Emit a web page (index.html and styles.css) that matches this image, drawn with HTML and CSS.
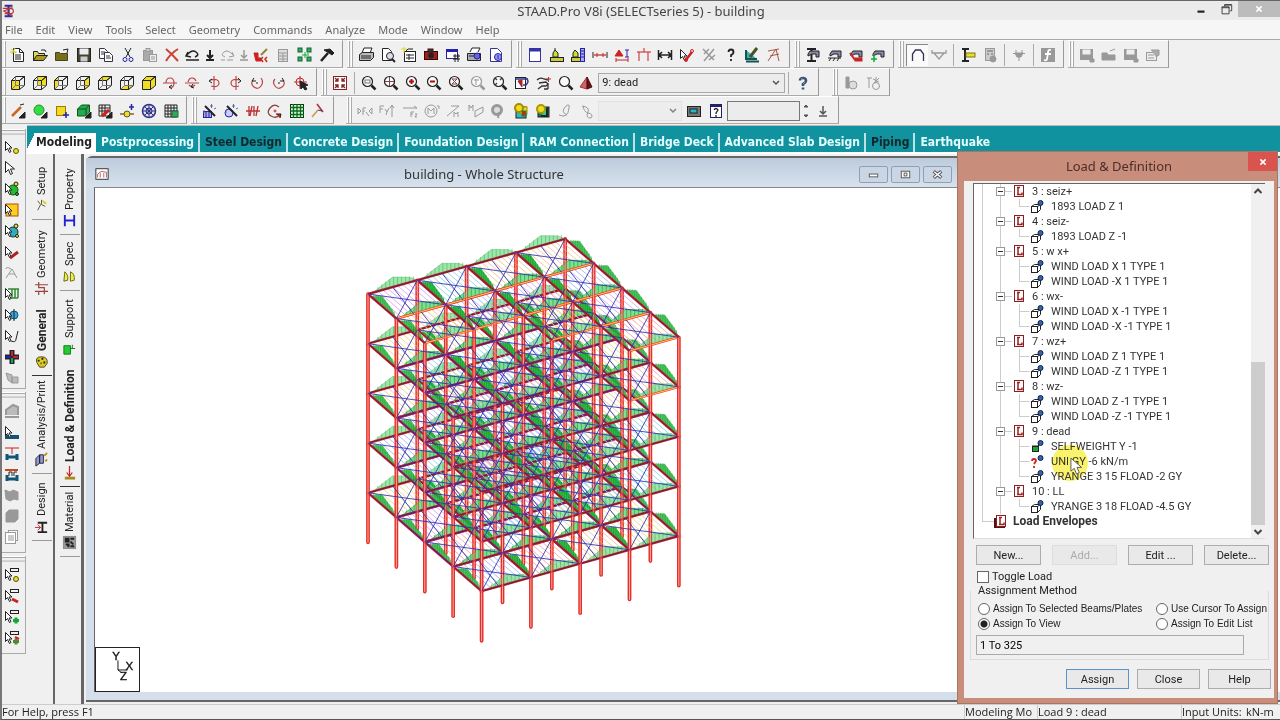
FILE: index.html
```html
<!DOCTYPE html>
<html lang="en">
<head>
<meta charset="utf-8">
<title>STAAD.Pro V8i (SELECTseries 5) - building</title>
<link rel="stylesheet" href="styles.css">
</head>
<body>
<div class="app">
  <header class="titlebar">
    <span class="app-icon" data-icon="logo"></span>
    <h1>STAAD.Pro V8i (SELECTseries 5) - building</h1>
    <div class="win-controls">
      <button class="wc" aria-label="Minimize"><svg viewBox="0 0 16 16"><path d="M4 11h8" stroke="#222" stroke-width="2.500"/></svg></button>
      <button class="wc" aria-label="Restore"><svg viewBox="0 0 16 16" fill="none" stroke="#333"><path d="M6.500 5V3h8v7h-2M6 3.500h8M3.500 5.500h8v8h-8zM3 6.500h9"/></svg></button>
      <button class="wc wc-close" aria-label="Close"><svg viewBox="0 0 16 16"><path d="M5 5l6 6M11 5l-6 6" stroke="#fff" stroke-width="1.800"/></svg></button>
    </div>
  </header>
  <nav class="menubar">
    <button>File</button><button>Edit</button><button>View</button><button>Tools</button><button>Select</button><button>Geometry</button><button>Commands</button><button>Analyze</button><button>Mode</button><button>Window</button><button>Help</button>
  </nav>
  <div class="toolrow">
    <div class="toolbar w-file"><i data-icons="new open close save copy cut paste delete undo down:slim redo downg:slim cutsel sheet nodes hammer"></i></div>
    <div class="toolbar w-print"><i data-icons="print preview report camera table printset pagei"></i></div>
    <div class="toolbar w-struct"><i data-icons="window scale1 scale2 dim support frame dimension selbeam selgray question draw angle"></i></div>
    <div class="toolbar w-beam"><i data-icons="beam1 beam2 beam3 beam4"></i></div>
    <div class="toolbar w-mode"><i data-icons="arch:pressed funnel | ibeam calc | plug | fx"></i></div>
    <div class="toolbar w-macro"><i data-icons="gsave gopen gdisk gprops"></i></div>
  </div>
  <div class="toolrow">
    <div class="toolbar w-view"><i data-icons="cubef cubeb cubel cuber cubet cubeu cubea rotx1 rotx2 roty1 roty2 rotz1 rotz2 rotcur"></i></div>
    <div class="toolbar w-zoom"><i data-icons="fit | magwin magmove magin magout magdyn maggray magall prev pan mag pyramid"></i><select class="load-select" aria-label="Active load case"><option>9: dead</option></select><i data-icons="| help"></i></div>
    <div class="toolbar w-extra"><i data-icons="gcol gstar"></i></div>
  </div>
  <div class="toolrow last-row">
    <div class="toolbar w-geo"><i data-icons="wand1 wand2 wand3 wand4 wand5 wand6 globe gridc"></i></div>
    <div class="toolbar w-gen"><i data-icons="magic1 magic2 mirror rotate meshg link"></i></div>
    <div class="toolbar w-result"><i data-icons="fx1 fy1 fz1 mx1 mz1 mz2 gring plate1 plate2 gloop gcurve"></i><select class="mode-select" disabled aria-label="Mode shape"><option></option></select><i data-icons="screen qbox"></i><input class="num" type="text" aria-label="Scale value"><i data-icons="spin:slim downb"></i></div>
  </div>

  <div class="band">
    <aside class="left-tools">
      <div class="vbar v1"><i data-icons="curnode cursor curgreen curyel curcyan curred curgray curcomb curblue curw cross curhand"></i></div>
      <div class="vbar v2"><i data-icons="gload curb beamr beamf gplate gsolid gtext"></i></div>
      <div class="vbar v3"><i data-icons="dn1 dn2 dn3 dn4"></i></div>
    </aside>
    <div class="main">
      <nav class="tabs">
        <button class="on">Modeling</button><button>Postprocessing</button><button class="dark">Steel Design</button><button>Concrete Design</button><button>Foundation Design</button><button>RAM Connection</button><button>Bridge Deck</button><button>Advanced Slab Design</button><button class="dark">Piping</button><button>Earthquake</button>
      </nav>
      <div class="work">
        <nav class="side side-a">
          <button class="s-setup"><span data-icon="t-setup"></span>Setup</button>
          <button class="s-geometry"><span data-icon="t-geom"></span>Geometry</button>
          <button class="s-general bold"><span data-icon="t-gen"></span>General</button>
          <button class="s-analysis"><span data-icon="t-anal"></span>Analysis/Print</button>
          <button class="s-design"><span data-icon="t-design"></span>Design</button>
        </nav>
        <nav class="side side-b">
          <button class="s-property"><span data-icon="t-prop"></span>Property</button>
          <button class="s-spec"><span data-icon="t-spec"></span>Spec</button>
          <button class="s-support"><span data-icon="t-supp"></span>Support</button>
          <button class="s-load bold"><span data-icon="t-load"></span>Load &amp; Definition</button>
          <button class="s-material"><span data-icon="t-mat"></span>Material</button>
        </nav>
        <section class="mdi">
          <div class="mdi-title">
            <span class="mdi-icon" data-icon="mdi"></span>
            <h2>building - Whole Structure</h2>
            <div class="mdi-controls">
              <button aria-label="Minimize view"><svg viewBox="0 0 16 16"><rect x="3.500" y="7.500" width="9" height="3" fill="#fff" stroke="#555"/></svg></button>
              <button aria-label="Maximize view"><svg viewBox="0 0 16 16" fill="#fff" stroke="#555"><rect x="3.500" y="4.500" width="9" height="7"/><rect x="6.500" y="6.500" width="3" height="3"/></svg></button>
              <button aria-label="Close view"><svg viewBox="0 0 16 16" fill="none"><path d="M4 4.500l8 7M12 4.500l-8 7" stroke="#555" stroke-width="3.500"/><path d="M4.500 5l7 6M11.500 5l-7 6" stroke="#fff" stroke-width="1.500"/></svg></button>
            </div>
          </div>
          <div class="canvas">
            <svg id="model" class="model" viewBox="95 188 860 504" role="img" aria-label="Whole structure model"></svg>
            <svg class="axes" viewBox="0 0 45 45" aria-label="Axes"><path d="M23 13v10h10M23 23l4 3" fill="none" stroke="#111"/><text x="17" y="13">Y</text><text x="31" y="23">X</text><text x="25" y="34">Z</text></svg>
          </div>
        </section>
      </div>
    </div>
  </div>
  <footer class="status"><span class="st-help">For Help, press F1</span><span class="st-mode">Modeling Mo</span><span class="st-load">Load 9 : dead</span><span class="st-unit">Input Units:</span><span class="st-val">kN-m</span></footer>

  <section class="dialog" role="dialog" aria-labelledby="dlg-title">
    <div class="dlg-title"><h2 id="dlg-title">Load &amp; Definition</h2><button class="dlg-close" aria-label="Close dialog"><svg viewBox="0 0 16 16"><path d="M4.500 4.500l7 7M11.500 4.500l-7 7" stroke="#fff" stroke-width="2"/></svg></button></div>
    <div class="dlg-body">
      <div class="tree-box">
        <ul class="tree">
          <li><div class="case">3 : seiz+</div><ul><li>1893 LOAD Z 1</li></ul></li>
          <li><div class="case">4 : seiz-</div><ul><li>1893 LOAD Z -1</li></ul></li>
          <li><div class="case">5 : w x+</div><ul><li>WIND LOAD X 1 TYPE 1</li><li>WIND LOAD -X 1 TYPE 1</li></ul></li>
          <li><div class="case">6 : wx-</div><ul><li>WIND LOAD X -1 TYPE 1</li><li>WIND LOAD -X -1 TYPE 1</li></ul></li>
          <li><div class="case">7 : wz+</div><ul><li>WIND LOAD Z 1 TYPE 1</li><li>WIND LOAD -Z 1 TYPE 1</li></ul></li>
          <li><div class="case">8 : wz-</div><ul><li>WIND LOAD Z -1 TYPE 1</li><li>WIND LOAD -Z -1 TYPE 1</li></ul></li>
          <li><div class="case">9 : dead</div><ul><li data-kind="i-self">SELFWEIGHT Y -1</li><li data-kind="i-uni">UNI GY -6 kN/m<span class="halo"></span><svg class="pointer" viewBox="0 0 14 20"><path d="M1 1v14l3.500-3 2.500 6 3-1.500-2.500-5.500h5z" fill="#fff" stroke="#555"/></svg></li><li>YRANGE 3 15 FLOAD -2 GY</li></ul></li>
          <li><div class="case">10 : LL</div><ul><li>YRANGE 3 18 FLOAD -4.5 GY</li></ul></li>
          <li class="envelopes"><div>Load Envelopes</div></li>
        </ul>
        <div class="scroll"><svg viewBox="0 0 14 14"><path d="M3.500 9L7 5.500 10.500 9" fill="none" stroke="#444" stroke-width="2"/></svg><div class="thumb"></div><svg viewBox="0 0 14 14"><path d="M3.500 5L7 8.500 10.500 5" fill="none" stroke="#444" stroke-width="2"/></svg></div>
      </div>
      <div class="edit-row"><button class="btn">New...</button><button class="btn" disabled>Add...</button><button class="btn">Edit ...</button><button class="btn">Delete...</button></div>
      <label class="opt toggle"><input type="checkbox">Toggle Load</label>
      <fieldset>
        <legend>Assignment Method</legend>
        <div class="radios">
          <label class="opt"><input type="radio" name="m">Assign To Selected Beams/Plates</label>
          <label class="opt"><input type="radio" name="m">Use Cursor To Assign</label>
          <label class="opt"><input type="radio" name="m" checked>Assign To View</label>
          <label class="opt"><input type="radio" name="m">Assign To Edit List</label>
        </div>
        <input class="list" type="text" value="1 To 325" aria-label="Assigned members" readonly>
      </fieldset>
      <div class="act-row"><button class="btn primary">Assign</button><button class="btn">Close</button><button class="btn">Help</button></div>
    </div>
  </section>
</div>
<script src="app.js"></script>
</body>
</html>
```
FILE: styles.css
```css
* { box-sizing: border-box; }
body { margin: 0; background: #f0f0f0; color: #222; font: 12px "Open Sans", "Noto Sans", sans-serif; }
button { border: 0; padding: 0; margin: 0; background: none; color: inherit; font: inherit; }
h1, h2 { margin: 0; font-weight: 400; }
ul { list-style: none; margin: 0; padding: 0; }
svg { display: block; }

.app { position: relative; display: flex; flex-direction: column; height: 100vh; overflow: hidden; border-left: 2px solid #777; border-top: 1px solid #666; border-bottom: 1px solid #555; }
.titlebar { position: relative; display: flex; flex: none; align-items: center; height: 19px; background: #ebebeb; }
.titlebar h1 { flex: 1; text-align: center; font: 13px/18px "Noto Sans", sans-serif; color: #444; }
.app-icon { position: absolute; left: 0; }
.app-icon svg { width: 14px; height: 16px; }
.win-controls { position: absolute; right: 0; top: 0; display: flex; }
.wc { display: grid; place-items: center; width: 25px; height: 16px; }
.wc svg { width: 14px; height: 14px; }
.wc-close { width: 42px; background: #bcbcbc; }
.menubar { display: flex; flex: none; gap: 13px; padding-left: 3px; height: 20px; background: #f6f6f6; border-bottom: 1px solid #a8a8a8; color: #666; }
.menubar button { font: 11px/20px "Noto Sans", sans-serif; }

.toolrow { display: flex; flex: none; height: 28px; gap: 4px; }
.last-row { margin-bottom: 1px; }
.toolbar { display: flex; align-items: center; flex: none; padding: 1px 4px 0 8px; border-right: 1px solid #999; border-bottom: 1px solid #aaa; border-top: 1px solid #fff; background: linear-gradient(90deg, transparent 1px, #fff 1px, #fff 2px, #aaa 2px, #aaa 3px, transparent 3px, transparent 4px, #fff 4px, #fff 5px, #aaa 5px, #aaa 6px, transparent 6px); }
.toolbar:first-child { padding-left: 5px; background: linear-gradient(90deg, transparent 2px, #fff 2px, #fff 3px, #aaa 3px, #aaa 4px, transparent 4px); }
.w-file { width: 341px; } .w-print { width: 165px; } .w-struct { width: 274px; } .w-beam { width: 100px; } .w-mode { width: 166px; } .w-macro { width: 101px; }
.w-view { width: 315px; } .w-zoom { width: 498px; } .w-extra { width: 58px; margin-left: 9px; }
.w-geo { width: 185px; } .w-gen { width: 143px; } .w-result { width: 493px; margin-left: 8px; }
.tool { display: flex; align-items: center; justify-content: center; flex: 1 1 22px; min-width: 0; height: 22px; }
.tool svg { width: 16px; height: 16px; flex: none; }
.tool.slim { flex-basis: 12px; flex-grow: 0; }
.tool.pressed { background: #fafafa; border-top: 1px solid #888; border-left: 1px solid #888; }
.sep { flex: none; width: 7px; height: 22px; background: linear-gradient(90deg, transparent 3px, #aaa 3px, #aaa 4px, transparent 4px); }
select { appearance: none; border: 1px solid #aaa; border-radius: 0; color: #222; background: #ececec url("data:image/svg+xml,%3Csvg xmlns='http://www.w3.org/2000/svg' width='12' height='8'%3E%3Cpath d='M3 2l3 3 3-3' fill='none' stroke='%23555' stroke-width='1.500'/%3E%3C/svg%3E") no-repeat right 2px center; height: 20px; padding: 0 3px; font: 11px Roboto, sans-serif; }
.load-select { width: 188px; }
.mode-select { width: 84px; border-color: #ddd; opacity: .7; }
.num { width: 73px; height: 20px; border: 1px solid #777; background: #ececec; }

.band { display: flex; flex: 1; min-height: 0; }
.left-tools { flex: none; width: 25px; padding-top: 4px; }
.vbar { display: flex; flex-direction: column; align-items: center; width: 24px; padding: 8px 4px 0 0; border-right: 1px solid #aaa; border-bottom: 1px solid #aaa; background: linear-gradient(#fff 1px, #aaa 1px, #aaa 2px, transparent 2px, transparent 4px, #fff 4px, #aaa 5px, transparent 6px) no-repeat; }
.vbar .tool { flex: none; width: 20px; height: 21px; }
.v1 { height: 260px; margin-bottom: 3px; } .v2 { height: 161px; margin-bottom: 3px; } .v3 { height: 98px; }
.v1 .tool { flex: 0 1 21px; }
.main { display: flex; flex-direction: column; flex: 1; min-width: 0; border-top: 1px solid #bbb; }
.tabs { display: flex; flex: none; height: 28px; padding-top: 7px; background: #10929f; border-bottom: 2px solid #fff; color: #e4ffff; font: bold 12px/19px "DejaVu Sans Condensed", sans-serif; }
.tabs button { white-space: nowrap; height: 19px; padding: 0 4px 0 5px; border-right: 2px solid #b8e4e6; }
.tabs button:last-child { border: 0; }
.tabs .on { width: 69px; padding: 0 0 0 5px; border: 0; color: #222; background: linear-gradient(115deg, transparent 7px, #fff 7px); }
.tabs .dark { color: #12282c; }
.work { display: flex; flex: 1; min-height: 0; }
.side { display: flex; flex-direction: column; flex: none; width: 28px; align-items: center; border-right: 2px solid #666; font: 12px Roboto, sans-serif; padding: 2px 0 3px 4px; }
.side-b { border-right: 3px solid #666; width: 29px; }
.side button { display: flex; align-items: center; gap: 3px; width: 20px; writing-mode: vertical-rl; transform: rotate(180deg); border-top: 1px solid #999; padding-top: 6px; white-space: nowrap; font-size: 11px; line-height: 20px; }
.side span svg { width: 15px; height: 15px; }
.side .bold { font-size: 12px; font-weight: 700; border-top-color: #333; }
.side .s-geometry { border-top-color: transparent; }
.s-setup { height: 64px; } .s-geometry { height: 83px; } .s-general { height: 73px; } .s-analysis { height: 98px; } .s-design { height: 67px; }
.s-property { height: 79px; } .s-spec { height: 56px; } .s-support { height: 72px; } .s-load { height: 124px; } .s-material { height: 70px; }
.side .s-support { border-top-color: transparent; }

.mdi { display: flex; flex-direction: column; flex: 1; min-width: 0; margin: 2px 0 2px 2px; padding: 0 0 8px 8px; border-top: 2px solid #666; border-bottom: 2px solid #666; border-radius: 6px 0 0 0; background: #d5dfec; }
.mdi-title { position: relative; display: flex; flex: none; align-items: center; height: 29px; padding-top: 3px; background: linear-gradient(#bccbdc, #d8e2ee); margin-left: -8px; }
.mdi-icon { margin-left: 8px; width: 16px; }
.mdi-icon svg { width: 16px; height: 14px; }
.mdi-title h2 { position: absolute; left: 0; width: 796px; text-align: center; font: 13px/28px "Noto Sans", sans-serif; color: #333; }
.mdi-controls { position: absolute; left: 773px; display: flex; gap: 3px; }
.mdi-controls button { width: 29px; height: 17px; border: 1px solid #8fa0b6; border-radius: 2px; background: #cad6e4; display: grid; place-items: center; }
.mdi-controls svg { width: 15px; height: 15px; }
.canvas { position: relative; flex: 1; min-height: 0; background: #fff; border-top: 1px solid #888; border-left: 1px solid #666; overflow: hidden; }
.model { width: 860px; height: 504px; }
.axes { position: absolute; left: 0; bottom: 0; width: 45px; height: 45px; border: 1px solid #222; background: #fff; font: 12px "Liberation Sans", sans-serif; }
.axes text { fill: #111; stroke: #111; stroke-width: .4px; }
.status { display: grid; flex: none; grid-template-columns: 1fr 73px 144px 65px 34px; height: 15px; line-height: 14px; font-size: 11px; border-top: 1px solid #ccc; white-space: nowrap; }
.st-mode { border-left: 1px solid #ccc; } .st-load { border-left: 1px solid #ccc; } .st-unit { border-left: 1px solid #ccc; }

.dialog { position: absolute; top: 150px; right: 2px; width: 321px; height: 553px; padding: 0 3px 6px 6px; background: #c98d7c; border: 1px solid #a97565; display: flex; flex-direction: column; font: 11px Roboto, sans-serif; }
.dlg-title { position: relative; flex: none; height: 29px; }
.dlg-title h2 { text-align: center; font: 13px/28px "Noto Sans", sans-serif; color: #4a2f2a; }
.dlg-close { position: absolute; right: -3px; top: 0; width: 29px; height: 19px; background: #d9534f; display: grid; place-items: center; }
.dlg-close svg { width: 12px; height: 12px; }
.dlg-body { flex: 1; display: flex; flex-direction: column; background: #f0f0f0; padding: 2px 5px 9px 9px; }
.tree-box { display: flex; flex: none; height: 356px; margin-right: 4px; background: #fff; border-top: 1px solid #666; border-left: 1px solid #666; border-bottom: 1px solid #ddd; }
.tree { flex: 1; position: relative; line-height: 15px; color: #333; background: linear-gradient(#ccc, #ccc) 8px 0 / 1px 338px no-repeat; }
.tree > li { position: relative; padding-left: 21px; background: linear-gradient(#ccc, #ccc) 26px 0 / 1px 100% no-repeat; }
.tree .case { position: relative; padding-left: 37px; }
.tree .case svg, .tree li li > svg:first-child, .envelopes svg { position: absolute; }
.tree .case svg { left: 1px; top: 0; width: 34px; height: 15px; }
.tree ul li { position: relative; padding-left: 56px; white-space: nowrap; }
.tree li li > svg:first-child { left: 24px; top: 0; width: 27px; height: 15px; }
.tree .envelopes { background: none; font: 700 12px/15px Roboto, sans-serif; padding-left: 39px; }
.envelopes svg { left: 9px; top: 0; width: 26px; height: 15px; }
.halo { position: absolute; left: 57px; top: -9px; width: 36px; height: 36px; border-radius: 50%; background: #f7ef48; opacity: .8; mix-blend-mode: multiply; }
.pointer { position: absolute; left: 75px; top: 3px; width: 13px; height: 19px; z-index: 2; }
.scroll { display: flex; flex-direction: column; width: 14px; background: #f0f0f0; }
.scroll svg { flex: none; width: 14px; height: 14px; }
.thumb { flex: none; margin-top: 164px; height: 163px; background: #cdcdcd; }
.edit-row { display: grid; grid-template-columns: repeat(4, 1fr); gap: 11px; margin: 6px 0 4px 3px; }
.btn { height: 20px; border: 1px solid #adadad; background: #e9e9e9; text-align: center; }
.btn:disabled { color: #aaa; border-color: #ddd; }
.btn.primary { border-color: #5a93c8; }
.opt { display: flex; align-items: center; gap: 3px; height: 15px; white-space: nowrap; }
.opt input { appearance: none; flex: none; margin: 0; width: 12px; height: 12px; border: 1px solid #666; background: #fff; }
.opt input[type=radio] { border-radius: 50%; }
.opt input[type=radio]:checked { background: radial-gradient(#222 3px, #fff 4px); }
.toggle { margin: 0 0 0 4px; }
fieldset { margin: 0 0 0 -3px; padding: 4px 0 4px 7px; border: 1px solid #dcdcdc; border-top: 0; min-width: 0; }
legend { padding: 0; line-height: 13px; }
.radios { display: grid; grid-template-columns: 178px 1fr; font: 10px "Liberation Sans", sans-serif; }
.list { display: block; width: 268px; height: 20px; margin: 4px 0 0 -2px; padding: 0 3px; border: 1px solid #aaa; background: #f0f0f0; font: inherit; }
.act-row { display: flex; gap: 8px; justify-content: flex-end; margin: 9px -2px 0 0; }
.act-row .btn { width: 63px; }
```
FILE: app.js
```js
const K = '#222', R = '#c22', G = '#1a3', B = '#22a', Y = '#ed2', N = '#999';
const p = (d, s = K, f = 'none', w = 1) => `<path d="${d}" stroke="${s}" fill="${f}" stroke-width="${w}"/>`;
const c = (x, y, r, s = K, f = 'none', w = 1) => `<circle cx="${x}" cy="${y}" r="${r}" stroke="${s}" fill="${f}" stroke-width="${w}"/>`;
const r = (x, y, w, h, s = K, f = 'none') => `<rect x="${x}" y="${y}" width="${w}" height="${h}" stroke="${s}" fill="${f}"/>`;
const FR = 'M1.500 5.500h8v9h-8z', TP = 'M1.500 5.500l4-4h9l-5 4z', SD = 'M9.500 5.500l5-4v9l-5 4z', BK = 'M5.500 1.500h9v9h-9z', LF = 'M1.500 5.500l4-4v9l-4 4z', BT = 'M1.500 14.500l4-4h9l-5 4z';
const cube = (...fill) => fill.map(f => p(f, 'none', Y)).join('') + p(FR) + p(TP) + p(SD) + (fill.length > 1 ? '' : p('M5.500 2v8.500l-4 4M5.500 10.500h9', '#777'));
const mag = (inner = '', s = K) => p('M10.500 10.500l4 4', s, 'none', 2.5) + c(6.5, 6.5, 5, s, '#fafafa', 1.2) + inner;
const CUR = p('M1.500 1.500v11l3-3 2 5 2-1-2-4.500h4z', K, '#fff');
const CURS = p('M1.500 2.500v9l2-2 2 4 1.500-1-2-3.500h3z', K, '#fff');
const orb = (d, arrow, s = '#b44') => p(d, s, 'none', 1.2) + p(arrow, K);
const wand = p('M3 3l10 10', K, 'none', 2) + p('M8 3h3M9.500 1v4M2 7v3M12 6l2-1', '#66a');
const page = (s = K) => p('M3.500 1.500h6l4 4v9h-10z', s, '#fff') + p('M9.500 1.500v4h4M5 8h6M5 10h6M5 12h6', s);
const gdisk = r(1.5, 2.5, 12, 10, N, N) + r(4, 3, 7, 4, '#eee', '#eee') + p('M11 12h4v3h-4z', N, N);
const corner = p('M9 15h6V9z', K, K);
const hand = p('M5 4h9v6h-3V7H7L3 9V7z', K, '#88a');
const bar = r(6.5, 1.5, 8, 3);
const ICONS = {
  logo: p('M3 2h9M3 14h9M7.500 2v12', '#3a2a9a', 'none', 2.5) + p('M1 5h8q4 0 4 3t-4 3h-6M12 4L2 8l10 5', '#b33', 'none', 1.3),
  new: page() + p('M1 2l5 4M5 1L2 7M0 5h7', '#cc3'),
  open: p('M1.500 13.500v-9h4l1 2h6v2', K, '#dd5') + p('M1.500 13.500l3-5h11l-4 5z', K, '#a92') + p('M9 3h4l1 2', K),
  close: p('M1.500 13.500v-8h4l1 1h7v7z', '#442', '#7a6d1a') + p('M9 3l5-1-1 4'),
  save: r(1.5, 1.5, 13, 13, K, '#443') + r(4, 2, 8, 5, '#eee', '#eee') + r(5, 10, 6, 4, '#ccc', '#ccc'),
  copy: p('M1.500 1.500h5l3 3v7h-8zM3 5h4M3 7h4', '#334', '#fff') + p('M6.500 5.500h5l3 3v6h-8zM8 9h4M8 11h5', '#334', '#fff'),
  cut: p('M5 1l5 9M11 1L6 10') + c(5, 12.5, 2, B) + c(11, 12.5, 2, B),
  paste: r(1.5, 3.5, 9, 10, N, '#aaa') + r(4, 1.500, 4, 3, N, '#ccc') + r(7.5, 7.5, 7, 7, N, '#eee') + p('M9 10h4M9 12h4', N),
  delete: p('M2 2q6 5 12 12M14 2Q6 7 2 14', '#c43', 'none', 2),
  undo: p('M3 5l-2 4 5 1M2 8q5-6 9-3t-1 5M1 13h13', K, 'none', 1.5), redo: p('M13 5l2 4-5 1M14 8q-5-6-9-3t1 5M2 13h4M8 13h6', N),
  down: p('M8 3v7M5 8l3 3 3-3M4 13h8', K, 'none', 2), downg: p('M8 3v7M5 8l3 3 3-3M4 13h8', N, 'none', 1.5), downb: p('M8 3v7M5 8l3 3 3-3M4 13h8', '#555', 'none', 1.500),
  cutsel: p('M1 6h4v5h3v3H3z', R, R) + p('M8 8l6-6', '#883', 'none', 2) + p('M10 10l-2 2 2 3M14 10l-2 2 2 3', R, 'none', 1.5),
  sheet: r(3.5, 2.5, 9, 12, N, '#ddd') + p('M4 6h8M4 9h8M4 12h8M8 6v8', N),
  nodes: [[1,1],[10,1],[1,10],[10,10]].map(a => r(a[0], a[1], 4, 4, '#163', '#3a6')).join('') + p('M5 8h5M8 5v6M11 6v3', G),
  hammer: p('M5 3l6-1 4 4-2 2-3-2z', K, K) + p('M9 6L2 14', K, 'none', 2.5),
  print: p('M4 6l2-5h8l-2 5', K, '#fff') + p('M1.500 7.500l3-2h11v5l-3 3h-11zM3 9h10M3 11h10', K, '#bbb'),
  preview: p('M2.500 1.500h6l3 3v9h-9z', K, '#fff') + c(10, 9, 3.5, K, '#dde') + p('M12 12l3 3', K, 'none', 2),
  report: r(3.5, 4.5, 11, 10, K, '#fff') + p('M5 8h8M5 11h8M8 7v6M4 5l3-3h5', K) + p('M0 2h6M3 0v6', '#dd2'),
  camera: r(1.5, 4.5, 13, 8, '#400', '#922') + r(5, 2, 5, 3, K, '#622') + c(8, 8.5, 2.5, K, K),
  table: r(1.5, 2.5, 11, 9, B, '#fff') + p('M1 3.500h12', B, 'none', 3) + p('M8 9h7M8 12h7M10 7v8M13 7v8'),
  printset: p('M4 5l2-4h8l-2 4', K, '#fff') + p('M1.500 6.500h13v7h-13zM3 9h10', K, '#aab') + c(11, 9, 3, B, '#66c'),
  pagei: p('M2.500 1.500h7l4 4v9h-11z', '#339', '#fff') + c(10, 10, 3.5, B, '#99e') + p('M10 8v4', B),
  window: r(2.5, 1.500, 11, 13, '#33a', '#fff') + p('M2 3h12', '#33a', 'none', 3),
  scale1: r(1.5, 10.500, 13, 4, K, '#cc4') + p('M4 10V6l2-3 3 3v4z', K, '#cd3') + p('M6 3V1'), scale2: r(1.5, 10.500, 10, 4, K, '#cc4') + p('M3 10V6l2-3 3 3v4z', K, '#cd3') + r(10.5, 1.5, 4, 13, B, '#aae') + p('M10 4h4M10 7h4M10 10h4', B),
  dim: p('M2 8h12', R, 'none', 1.2) + p('M1 5v6M15 5v6', K) + p('M5 6v4M11 6v4', R), support: p('M1 9l4-6 4 6z', R, R) + p('M11 3h4M13 3v7M11 10h4', B) + p('M2 13h12M2 11v4M14 11v4', R),
  frame: p('M1 5h14M3 5v9M12 5v9M8 1v4', R), dimension: p('M1.500 3v10M14.500 3v10M2 8h12M5 5L2 8l3 3M11 5l3 3-3 3', K, 'none', 1.5),
  selbeam: CURS + p('M6 14l7-9', R, 'none', 2.5) + c(13, 4, 1.500, R) + c(7, 13, 1.5, R), selgray: p('M2 2l11 11M13 2L3 14M8 2l-5 5M8 13l6-5', N, 'none', 1.5),
  question: p('M5.500 5q0-2.500 2.500-2.500t2.500 2.500q0 2-2.500 3v2M8 12v2', K, 'none', 1.8), draw: p('M2 3v9h11M2 14.500h13', '#155', '#4aa', 2) + p('M6 10l7-9', '#452', 'none', 3),
  angle: p('M2 14l8-12 3 12M4 9l9-2M2 4l11-2', '#a54'),
  beam1: p('M2 2h9M2 14h9M6.500 2v12', K, 'none', 2) + hand, beam2: hand + p('M1 11h13M2 14l2-3M6 14l2-3M10 14l2-3', K), beam3: hand + p('M2 6l5 7', R, 'none', 2) + r(7, 11, 7, 3, R, R), beam4: hand + p('M4 7v8M1 12h6', G, 'none', 1.5),
  arch: p('M2.500 14V7l3-4h5l3 4v7', '#335', 'none', 1.3), funnel: p('M1 3v3h14V3M3 6l5 6 5-6', N, 'none', 1.3),
  ibeam: p('M2 2h7M2 14h7M5 2v12', K, 'none', 2) + r(6, 6, 9, 4, '#772', Y), calc: r(3.5, 1.5, 9, 12, N, '#ccc') + p('M5 4h6M5 7h2M9 7h2', N, 'none', 2) + c(11, 12, 3, N, N),
  plug: p('M4 6h8l-2 4H6zM5 3v3M11 3v3M8 10v4M2 6.500h12', N, N), fx: r(1.5, 1.5, 13, 13, N, N) + p('M11 3q-3-1-3 3l-1 6q0 2-3 1M5 7h6', '#fff', 'none', 1.8),
  gsave: gdisk, gopen: p('M1 13V6h5l1 2h7v5zM9 4l5-2', N, N), gdisk, gprops: r(1.5, 5.5, 10, 8, N, '#eee') + p('M3 8h6M3 11h6M6 3h8v5l-3 2', N, '#aaa'),
  cubef: cube(FR), cubeb: cube(BK), cubel: cube(LF), cuber: cube(SD), cubet: cube(TP), cubeu: cube(BT), cubea: cube(FR, TP, SD),
  rotx1: orb('M1 8h14M4 8q0-5 4-5t4 5-4 4', 'M10 10l-3 2 3 2'), rotx2: orb('M1 8h14M4 7q1-4 4-4t4 3M5 10q3 3 6 0', 'M9 9l-2 3 3 1'), roty1: orb('M8 1v14M4 5q9-2 9 3t-8 3', 'M6 4L3 6l3 2'), roty2: orb('M8 1v14M12 5Q3 3 3 8t8 3', 'M10 3l3 3-3 2'),
  rotz1: orb('M4 5q-3 4 1 7t7-1 0-8', 'M5 3L3 6h4M8 7v2'), rotz2: orb('M12 5q3 4-1 7t-7-1 0-7', 'M11 3l2 3H9M8 7v2'), rotcur: orb('M1 7h13M7 1v13', 'M0 0') + c(7, 7, 4, R) + p('M7 6l8 4-3 1 2 3-2 1-2-3-2 2z', K, K),
  fit: r(1.5, 1.5, 13, 13, '#822', '#fff') + p('M3 3l3 3M13 3l-3 3M3 13l3-3M13 13l-3-3M3 6h3V3M10 3v3h3M3 10h3v3M13 10h-3v3', '#822', 'none', 1.3),
  magwin: mag(r(4, 5, 5, 3, '#777')), magmove: mag(p('M2 6.500h9M6.500 2v9', '#844')), magin: mag(p('M4 6.500h5M6.500 4v5', '#a11', 'none', 2)), magout: mag(p('M4 6.500h5', '#a11', 'none', 2)), magdyn: mag(p('M4 4h5L4 9h5z', '#844')), maggray: mag(p('M4 5h5M6 4v6', N), N), magall: mag(p('M3 3l2 2M10 3L8 5M3 10l2-2', '#444', 'none', 1.5)), mag: mag(),
  prev: r(1.5, 2.5, 10, 11, K, '#fff') + p('M4 6l4 6V5z', '#a22', '#a22') + p('M12 3q4 3 0 7l-3 0M1 4h13', '#338', 'none', 1.5), pan: p('M1 5q3-3 7-1l4 1M3 8l7-1q3 2 0 4H6l-4 3M12 8v6M8 14h4', '#333', 'none', 1.3) + p('M10 4h5M12.500 2v5', '#a33'), pyramid: p('M8 2L1 12l7 2z', '#a33', '#c66') + p('M8 2l5 10-5 2z', '#511', '#611'),
  help: p('M5 5.500q0-2.500 3-2.500t3 2.500q0 2-3 3.500v2M8 12.500v2', '#357', 'none', 2.600) + p('M6 4h2M8 9l2-2', '#b88'),
  gcol: p('M3 2h3v11H3z', N, N) + c(10, 10, 4, N, '#ddd'), gstar: p('M1 3h5M3 3v10M10 2v6M7 4l6 3M13 3L8 8', N) + c(10, 11, 3.500, N),
  wand1: p('M2 13L11 4', '#c62', 'none', 2.500) + p('M10 2l4-1', K) + corner, wand2: c(7, 7, 5, '#383', '#3d4') + corner, wand3: r(2.500, 3.5, 9, 9, '#a70', Y) + p('M9 12h6M12 9v6', B, 'none', 1.5), wand4: p('M1.500 6l4-4h8v7l-4 4h-8z', '#151', '#2a5') + p('M2 6h8v7M10 6l3-4', '#151') + corner, wand5: p('M2 2h11v11H2zM5 2v11M8 2v11M2 5h11M2 8h11') + p('M5 13l7-6', R, 'none', 3) + corner, wand6: p('M1 11h14', '#863', 'none', 1.5) + c(8, 11, 3, '#553', Y) + p('M10 4h5M12.500 1v6', B, 'none', 1.5),
  globe: c(8, 8, 6.5, '#338', '#dde', 1.5) + c(8, 8, 3, '#338') + p('M1 8h14M8 1v14M3 3l10 10M13 3L3 13', '#338'), gridc: p('M2 2h12v12H2zM5 2v12M8 2v12M11 2v12M2 5h12M2 8h12M2 11h12') + r(9, 8, 6, 6, '#264', '#3a5'),
  magic1: r(1.5, 8.5, 8, 6, B, '#aad') + p('M4 8v6M7 8v6', B) + wand, magic2: c(5, 10, 4, B, '#ccf') + wand, mirror: p('M1 8h14M4 3v10M7 3L5 13M9 3v10M13 3l-2 10', '#b33', 'none', 1.3), rotate: p('M12 4Q7 0 3 5t1 8 9-1', '#844', 'none', 1.3) + p('M9 11l5 0-1 4', K, R) + c(8, 8, 1, R), meshg: r(1.5, 1.5, 13, 13, '#131', '#cfc') + p('M4.500 1v14M8 1v14M11.500 1v14M1 4.500h14M1 8h14M1 11.500h14', '#162', 'none', 1.3), link: p('M2 14l6-7', '#c94', 'none', 1.5) + p('M7 1l6 8', '#a33', 'none', 1.5) + p('M8 7l4 1', '#33a'),
  fx1: p('M1 5l3 3-3 3zM15 5l-3 3 3 3zM6 12V5h3M6 8h2M9 9l3 4', N), fy1: p('M1 10V3h4M1 6h3M6 6l2 3 2-4M8 9l-1 3M13 3v11M11 5l2-3 2 3', N), fz1: p('M1 5h14l-3-2M9 14V9h3M9 11h2M13 11h2l-2 3h2', N), mx1: c(7, 8, 6, N) + p('M4 11V5l3 3 3-3v6M13 3h2v3', N), mz1: p('M1 13L13 3H5M8 14V9l2 2 2-2v5', N), mz2: p('M1 8V2l2 3 2-3v6M7 8l8-4v5l-8 5z', N), gring: c(7, 7, 4.500, N, '#ddd', 3) + p('M9 9l-1 6', N, 'none', 2),
  plate1: r(3, 4, 10, 11, K, '#3bb') + r(7, 4, 7, 7, '#a80', Y) + c(6, 5, 4, '#a80', Y, 2) + r(9, 8, 4, 5, '#183', R), plate2: r(3, 4, 11, 10, K, '#176') + c(6, 6, 4, '#a90', Y, 2) + p('M6 13h6V5', K, '#3c8', 2),
  gloop: p('M2 12q9 4 10-7 1-5-3-2-6 6 1 9', N), gcurve: p('M3 3q8 1 6 6-3 6 3 6 3-4-3-5Q5 9 4 3', N),
  screen: r(1.5, 3.5, 13, 10, K, '#777') + r(4, 6, 7, 4, K, '#2bc'), qbox: r(2.5, 1.5, 11, 13, '#226', '#fff') + p('M2 3h12', '#226', 'none', 2) + p('M6 7q2-3 4 0l-2 3v1M8 12v2', K, 'none', 1.3), spin: p('M6 4l2-2 2 2zM6 12l2 2 2-2z', '#555', '#555'),
  curnode: CURS + c(12, 12, 2.5, '#550', Y), cursor: CUR, curgreen: c(9, 9, 5, '#151', '#2b3') + CURS + c(12, 3, 2, K, Y) + c(13, 13, 1.5, K, '#2b3'), curyel: r(2, 2, 12, 12, '#a50', '#fc2') + CURS, curcyan: c(9, 9, 5, '#133', '#3ab') + CURS + c(12, 3, 2, K, Y) + c(13, 13, 1.5, K, Y), curred: CURS + p('M6 14l8-6', '#a22', 'none', 3), curgray: p('M2 13l6-9 5 9M7 4Q2 1 2 4M5 9h6', N), curcomb: p('M4 3h11M14 3v9M11 3v9M8 3v9M4 12h10', '#383', 'none', 1.5) + CURS, curblue: c(10, 8, 4, '#157', '#3ad') + CURS + p('M10 2v12'), curw: CURS + p('M7 13q5 2 5-2l2-8'), cross: p('M8 1v14M1 8h14', '#223', 'none', 5) + p('M8 2v5', R, 'none', 2) + p('M2 8h5', B, 'none', 2) + p('M9 8h5', R, 'none', 2) + p('M8 9v5', G, 'none', 2), curhand: p('M2 3l6 2 0 8-4-3zM8 7h6v6H8z', N, '#bbb'),
  gload: p('M1 14h14M2 12V7l7-5 5 2v8', N, '#bbb', 2), curb: p('M1 13h14', '#157', 'none', 4) + CURS, beamr: p('M2 12h12M3 9v6M13 9v6', '#157', 'none', 3) + p('M1 3h14M8 3v6', R), beamf: p('M2 13h12M3 9v6M13 9v6', '#157', 'none', 3) + p('M1 4h13', '#c42', 'none', 2) + p('M5 10V6h3v4M10 10V6h3'), gplate: p('M1 3l5 2 3-2 5 2v8l-4-1-4 2-4-2z', N, N), gsolid: p('M2 5l3-3h9v9l-3 3H2z', N, N), gtext: r(4.5, 1.5, 9, 10, N, '#fff') + r(1.5, 3.500, 10, 11, N, '#fff') + p('M4 7h6M4 9h6M4 11h6', N),
  dn1: bar + CURS + c(12, 12, 2.5, '#550', Y), dn2: bar + CURS + p('M8 11l6 3', R, 'none', 3), dn3: bar + CURS + p('M9 11.500h6M12 8.500v6', G, 'none', 3), dn4: bar + CURS + p('M9 11.500h6M12 8.500v6', '#583', 'none', 3) + p('M11 7l4 2', R, 'none', 2)
};
Object.assign(ICONS, {
  't-setup': p('M4 3l3 4-3 6M8 2v5l4 2', '#553') + p('M9 3l4 3', '#dc2', 'none', 2), 't-geom': p('M1 4h14M1 11h14M5 1v6l6 0v7M5 11v4', '#944', 'none', 1.3), 't-gen': p('M3 9q-2-6 5-6t6 7l-3 4H6z', '#442', '#dc2') + p('M4 7h2M8 5h2M10 9h2M7 10h1', K, 'none', 2), 't-anal': p('M2 7l4-4v9l-4 3zM6 3h4v9H6z', '#224', '#99c') + p('M11 4l3-3M12 10l2-2', '#b92', 'none', 2), 't-design': p('M4 14h10M4 4h10M9 4v10', K, 'none', 2) + p('M1 9h6M4 6l3 3-3 3', R),
  't-prop': p('M3 2v12M13 2v12M3 8h10', '#22c', 'none', 2), 't-spec': p('M3 3q4 3 3 9L2 13zM9 3q5 2 4 9l-4 1z', '#660', '#ee5'), 't-supp': p('M2 5h7v9H2zM9 8h5M11 4v4', '#171', '#2c3'), 't-load': p('M3 14h11', '#a82', 'none', 3) + p('M8 1v11M5 8l3 4 3-4', R, 'none', 1.3), 't-mat': r(1.5, 1.5, 13, 13, '#888', '#999') + p('M4 4h3v3H4zM9 4h4M9 7l3 3M4 10h3v3M9 12h4', K, K, 2),
  mdi: r(1, 2, 14, 12, K, '#fff') + p('M3 12V8l4-3 6 1v6M6 12V7M10 12V7', '#a55')
});
/* Side-tab pictures are drawn upright inside buttons that are turned half round. */
const svg = n => `<svg viewBox="0 0 16 16" aria-hidden="true">${n.startsWith('t-') ? `<g transform="rotate(180 8 8)">${ICONS[n]}</g>` : ICONS[n]}</svg>`;

document.querySelectorAll('[data-icons]').forEach(el => {
  el.outerHTML = el.dataset.icons.split(' ').map(t => {
    if (t === '|') return '<span class="sep"></span>';
    const [n, k = ''] = t.split(':');
    return `<button class="tool ${k}" aria-label="${n}">${svg(n)}</button>`;
  }).join('');
});
document.querySelectorAll('[data-icon]').forEach(el => { el.innerHTML = svg(el.dataset.icon); });

const ell = (x) => r(x + .5, 1.5, 9, 11, '#822', '#fff') + p(`M${x + 3} 3.500h3M${x + 4} 3.500v7h4v-2M${x + 3} 10.500h3`, '#922', 'none', 1.5);
const sv = (w, s) => `<svg viewBox="0 0 ${w} 15" aria-hidden="true">${s}</svg>`;
document.querySelectorAll('.case').forEach(el => el.insertAdjacentHTML('afterbegin',
  sv(34, p('M8 7.500h8', '#ccc') + r(.5, 3.5, 8, 8, N, '#fff') + p('M2 7.500h5', '#333') + ell(18))));
document.querySelectorAll('.tree li li').forEach(el => {
  const shape = { 'i-self': r(13.5, 7.5, 6, 5, K, '#1a3') + p('M13 7h6l2-2'), 'i-uni': p('M13 7q0-2 2-2t2 2l-2 3M15 12v2', '#c22', 'none', 1.8) }[el.dataset.kind]
    || r(12.5, 7.5, 6, 6, K, '#fff') + p('M12.500 7.500l3-2h6v5l-3 3M18.500 7.500l3-2');
  const last = !el.nextElementSibling;
  el.insertAdjacentHTML('afterbegin', sv(27, p(`M.5 0V${last ? 8 : 15}M.500 7.500h10`, '#ccc') + shape + c(21.5, 4, 2.5, '#124', '#36a')));
});
document.querySelector('.envelopes').insertAdjacentHTML('afterbegin', sv(26, p('M0 7.500h11', '#ccc') + p('M12 4v9h10', '#511', 'none', 2) + ell(13)));

/* Frame model: bays along i and j, storeys along l. */
const P = (i, j, l) => [368 + 49.3 * i + 28.4 * j, 294 - 13.8 * i + 24.6 * j + 49.7 * l];
const at = (a, b, t, up = 0) => [a[0] + (b[0] - a[0]) * t, a[1] + (b[1] - a[1]) * t - up];
const D = pts => 'M' + pts.map(q => q.map(v => v.toFixed(1)).join(' ')).join('L');
const deep = [[2, 2, 3, 4], [3, 3, 3, 4], [4, 4, 4, 4], [4, 4, 4, 4], [4, 4, 4, 4]];
const tints = ['#dca6ee', '#90d4e8', '#a9b6f0', '#f0c890', '#f4a8a8', '#e6dc8a'];
let out = '', lines = '', seed = 5;
const rnd = n => (seed = (seed * 16807) % 2147483647) % n;
const hump = (a, b, strong) => {
  const s = p(D([at(a, b, .1), at(a, b, .5, 10), at(a, b, .85, 5), b]) + 'z', '#2fae45', strong ? '#22c03a' : '#6fe086', .6);
  let h = '';
  for (let t = .2; t < .95; t += .08) h += D([at(a, b, t), at(a, b, t, t < .5 ? t * 20 : 10 - (t - .5) * 12)]);
  return `<g opacity="${strong ? .85 : .7}">${s + p(h, '#128a2c', 'none', .6)}</g>`;
};
const beam = (a, b, hot, deepIn) => p(D([a, b]), hot ? '#f04a20' : deepIn ? '#b0205a' : '#c8203a', 'none', 2.4) + p(D([a, b]), hot ? '#ffc070' : deepIn ? '#4a2060' : '#5a2830', 'none', 1);
for (let l = 4; l >= 0; l--) {
  for (let j = 0; j <= 4; j++) for (let i = 0; i <= 4; i++) {
    if (j <= deep[l][Math.min(i, 3)]) {
      const q = D([P(i, j, l), P(i, j, l + 1)]);
      out += `<g stroke-linecap="round">${p(q, '#e02c24', 'none', 3.600) + p(q, '#ffa79c', 'none', 1)}</g>`;
    }
  }
  for (let j = 0; j < 4; j++) for (let i = 0; i < 4; i++) {
    if (j >= deep[l][i]) continue;
    const a = P(i, j, l), b = P(i + 1, j, l), e = P(i + 1, j + 1, l), f = P(i, j + 1, l);
    let h = '';
    for (let t = .1; t < 1; t += .1) h += D([at(a, e, t), at(a, b, t)]) + D([at(f, e, t), at(a, e, t)]);
    out += p(h, tints[rnd(6)], 'none', .9);
    lines += D([a, e]) + D([b, f]) + D([at(a, b, .5), at(f, e, .35)]);
    out += hump(a, b, false) + hump(f, e, false) + hump(a, f, true) + hump(b, e, true);
    const top = l === 0 && (j > 0 || i === 0);
    const inner = l > 0 && j > 0 && j < 3;
    out += beam(a, b, l === 0 && j > 0, inner) + beam(f, e, top || (l === 1 && j === 3 && i > 1), inner) + beam(a, f, false, inner) + beam(b, e, false, inner);
  }
}
/* The rear columns stay visible through the floors. */
let cols = '';
for (let j = 0; j <= 4; j++) for (let i = 0; i <= 4; i++) {
  const first = [0, 1, 2, 3, 4].find(l => j <= deep[l][Math.min(i, 3)]);
  cols += D([P(i, j, first), P(i, j, 5)]);
}
out += `<g opacity=".55">${p(cols, '#e8302c', 'none', 3.4) + p(cols, '#ffb0a8', 'none', 1)}</g>`;
out += `<g opacity=".85">${p(lines, '#2a30b4', 'none', 1)}</g>`;
document.getElementById('model').innerHTML = out;
```
